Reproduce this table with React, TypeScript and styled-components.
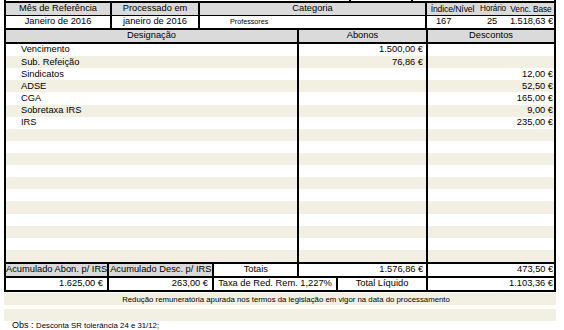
import React from 'react';
import styled, { createGlobalStyle } from 'styled-components';

const GREY = '#dadada';
const CREAM = '#f2f0e2';
const LINE = '#000';

const GlobalStyle = createGlobalStyle`
  body {
    margin: 0;
    background: #fff;
    color: #000;
    font-family: "Liberation Sans", Arial, sans-serif;
  }
`;

type Align = 'left' | 'center' | 'right';

const justify = (a?: Align) =>
  a === 'right' ? 'flex-end' : a === 'left' ? 'flex-start' : 'center';

const Page = styled.div`
  width: 552px;
  padding-left: 4px;
`;

// tail of the table that sits above the visible area
const Stub = styled.div`
  display: flex;
  height: 1px;
  border-left: 2px solid ${LINE};
  border-right: 2px solid ${LINE};
`;

const StubCell = styled.div<{ $w: number }>`
  flex: 0 0 ${({ $w }) => $w}px;
  box-sizing: border-box;
  & + & {
    border-left: 2px solid ${LINE};
  }
`;

const Sheet = styled.div`
  border: 2px solid ${LINE};
  display: flex;
  flex-direction: column;
`;

const Row = styled.div<{ $h: number; $line?: number }>`
  display: flex;
  height: ${({ $h }) => $h}px;
  border-top: ${({ $line = 0 }) => $line}px solid ${LINE};
`;

const Cell = styled.div<{
  $w: number;
  $bg?: string;
  $align?: Align;
  $size?: number;
  $pl?: number;
  $pr?: number;
}>`
  flex: 0 0 ${({ $w }) => $w}px;
  box-sizing: border-box;
  display: flex;
  align-items: center;
  justify-content: ${({ $align }) => justify($align)};
  padding: 0 ${({ $pr = 0 }) => $pr}px 0 ${({ $pl = 0 }) => $pl}px;
  background: ${({ $bg }) => $bg || 'transparent'};
  font-size: ${({ $size = 9.3 }) => $size}px;
  line-height: 1;
  white-space: nowrap;
  & + & {
    border-left: 2px solid ${LINE};
  }
`;

const Metric = styled.span<{
  $w: number;
  $size: number;
  $align?: Align;
  $pl?: number;
  $pr?: number;
}>`
  flex: 0 0 ${({ $w }) => $w}px;
  box-sizing: border-box;
  display: flex;
  justify-content: ${({ $align }) => justify($align)};
  padding: 0 ${({ $pr = 0 }) => $pr}px 0 ${({ $pl = 0 }) => $pl}px;
  font-size: ${({ $size }) => $size}px;
  letter-spacing: -0.1px;
`;

const Body = styled.div`
  display: flex;
  flex-direction: column;
  height: 218px;
  border-top: 2px solid ${LINE};
  border-bottom: 2px solid ${LINE};
`;

const BodyRow = styled.div`
  flex: 1;
  display: flex;
  &:nth-child(even) {
    background: ${CREAM};
  }
`;

const Band = styled.div<{ $gap: number }>`
  height: 12px;
  margin-top: ${({ $gap }) => $gap}px;
  background: ${CREAM};
  display: flex;
  align-items: center;
  justify-content: center;
  padding-left: 12px;
  font-size: 7.8px;
`;

const Obs = styled.div`
  margin-top: 0;
  padding-left: 8px;
  font-size: 9px;
  line-height: 9px;
  white-space: nowrap;
`;

const ObsText = styled.span`
  font-size: 7.8px;
`;

const lines: [string, string, string][] = [
  ['Vencimento', '1.500,00 €', ''],
  ['Sub. Refeição', '76,86 €', ''],
  ['Sindicatos', '', '12,00 €'],
  ['ADSE', '', '52,50 €'],
  ['CGA', '', '165,00 €'],
  ['Sobretaxa IRS', '', '9,00 €'],
  ['IRS', '', '235,00 €'],
];

const rows = [...lines, ...Array.from({ length: 18 - lines.length }, () => ['', '', ''])];

export default function App() {
  return (
    <Page>
      <GlobalStyle />
      <Stub>
        <StubCell $w={343} />
        <StubCell $w={62} />
        <StubCell $w={143} />
      </Stub>
      <Sheet>
        <Row $h={12}>
          <Cell $w={104} $bg={GREY}>Mês de Referência</Cell>
          <Cell $w={88} $bg={GREY}>Processado em</Cell>
          <Cell $w={227} $bg={GREY}>Categoria</Cell>
          <Cell $w={129} $bg={GREY} $align="left">
            <Metric $w={51} $size={8.6} $align="center">Índice/Nível</Metric>
            <Metric $w={30} $size={8.2} $align="center">Horário</Metric>
            <Metric $w={46} $size={8.4} $align="center">Venc. Base</Metric>
          </Cell>
        </Row>
        <Row $h={12} $line={1}>
          <Cell $w={104}>Janeiro de 2016</Cell>
          <Cell $w={88}>janeiro de 2016</Cell>
          <Cell $w={227} $align="left" $pl={30} $size={7.2}>
            Professores
          </Cell>
          <Cell $w={129} $align="left">
            <Metric $w={51} $size={9.3} $align="left" $pl={9}>167</Metric>
            <Metric $w={30} $size={9.3} $align="center" $pr={2}>25</Metric>
            <Metric $w={46} $size={9.3} $align="right" $pr={1}>1.518,63 €</Metric>
          </Cell>
        </Row>
        <Row $h={12} $line={2}>
          <Cell $w={291} $bg={GREY}>Designação</Cell>
          <Cell $w={129} $bg={GREY}>Abonos</Cell>
          <Cell $w={128} $bg={GREY}>Descontos</Cell>
        </Row>
        <Body>
          {rows.map(([label, credit, debit], i) => (
            <BodyRow key={i}>
              <Cell $w={291} $align="left" $pl={15}>{label}</Cell>
              <Cell $w={129} $align="right" $pr={3}>{credit}</Cell>
              <Cell $w={128} $align="right" $pr={1}>{debit}</Cell>
            </BodyRow>
          ))}
        </Body>
        <Row $h={12}>
          <Cell $w={101} $bg={GREY}>Acumulado Abon. p/ IRS</Cell>
          <Cell $w={105} $bg={GREY}>Acumulado Desc. p/ IRS</Cell>
          <Cell $w={85}>Totais</Cell>
          <Cell $w={129} $align="right" $pr={3}>1.576,86 €</Cell>
          <Cell $w={128} $align="right" $pr={1}>473,50 €</Cell>
        </Row>
        <Row $h={12} $line={2}>
          <Cell $w={101} $align="right" $pr={4}>1.625,00 €</Cell>
          <Cell $w={105} $align="right" $pr={4}>263,00 €</Cell>
          <Cell $w={124}>Taxa de Red. Rem. 1,227%</Cell>
          <Cell $w={90}>Total Líquido</Cell>
          <Cell $w={128} $align="right" $pr={1}>1.103,36 €</Cell>
        </Row>
      </Sheet>
      <Band $gap={1}>
        Redução remuneratória apurada nos termos da legislação em vigor na data do processamento
      </Band>
      <Band $gap={4} />
      <Obs>
        Obs : <ObsText>Desconta SR tolerância 24 e 31/12;</ObsText>
      </Obs>
    </Page>
  );
}
